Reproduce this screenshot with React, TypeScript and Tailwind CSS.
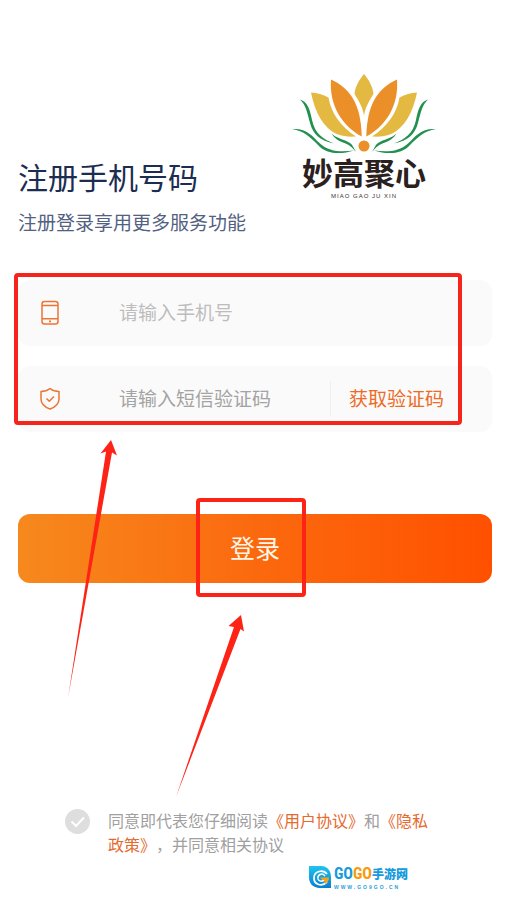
import React from "react";

function LotusHalf() {
  return (
    <>
      <path d="M19 18.500C25 19 31 20.500 36.500 23.500C39 39 49 53 64 62.500C56 63 50 62 46 60.500C31 54 23 38 19 18.500Z" fill="#e4b942" />
      <path d="M39 5.500C58 14 69 30 69.700 62.500C50 52 37 31 39 5.500Z" fill="#eb8f29" />
      <g fill="#22904f">
        <path d="M8 25.500C16 28 18 36 20 46C23 60 31 65 42 69.500C28 67 21 60 18 49C15 38 14 31 8 25.500Z" />
        <path d="M0 55C15 54 20 62 28 69.500C37 78 49 78 62 76.500C48 81 34 80 26 71C18 63 12 57 0 55Z" />
        <path d="M39.500 59.500C45 65 52 65 58 69C61 71 62 75 64 78C60 73 57 70.500 51 68.500C46 66.500 42 64 39.500 59.500Z" />
      </g>
    </>
  );
}

function LotusLogo() {
  return (
    <div className="flex w-36 flex-col items-center">
      <svg viewBox="0 0 144 82" className="h-[82px] w-36" fill="none" aria-hidden="true">
        <path d="M72 0C67 6 63 13 62.500 20C67 27 71 34 72 42C73 34 77 27 81.500 20C81 13 77 6 72 0Z" fill="#e4b942" />
        <LotusHalf />
        <g transform="translate(144 0) scale(-1 1)">
          <LotusHalf />
        </g>
        <circle cx="72" cy="72" r="5.5" fill="#eb8f29" />
      </svg>
      <span className="text-[31px] leading-8 font-bold text-[#2b201d]">妙高聚心</span>
      <span className="mt-1 font-['Liberation_Sans'] text-[6px] leading-[8px] tracking-[1px] whitespace-pre text-[#3b3230]">
        MIAO GAO JU XIN
      </span>
    </div>
  );
}

function PhoneIcon() {
  return (
    <svg viewBox="0 0 20 26" className="h-[26px] w-5" fill="none" stroke="#ed7433" strokeWidth="1.5" aria-hidden="true">
      <rect x="2" y="1.5" width="16" height="22.5" rx="2.5" />
      <path d="M2 5.500H18M2 18.700H18" />
      <path d="M9 21.400H11" strokeWidth="1.6" />
    </svg>
  );
}

function ShieldIcon() {
  return (
    <svg viewBox="0 0 20 24" className="h-6 w-5" fill="none" stroke="#ed7433" strokeWidth="1.5" strokeLinejoin="round" aria-hidden="true">
      <path d="M10 1.500C7.500 3.500 4.500 4.500 1 4.500V12C1 17 4.500 20 10 22C15.500 20 19 17 19 12V4.500C15.500 4.500 12.500 3.500 10 1.500Z" />
      <path d="M6.500 11.500L9.300 14.300L14 9.500" />
    </svg>
  );
}

function SiteMark() {
  return (
    <div className="flex items-center gap-[2px]">
      <svg viewBox="0 0 23 23" className="size-[23px]" fill="none" aria-hidden="true">
        <defs>
          <linearGradient id="markBlue" x1="0" y1="0" x2="0" y2="1">
            <stop stopColor="#20c4ee" />
            <stop offset="1" stopColor="#087ed2" />
          </linearGradient>
        </defs>
        <path d="M0 0H13C20 1 22 6 22 12V22H10C3 21 0 17 0 11Z" fill="url(#markBlue)" />
        <path d="M18 8C14 3 5 5 5 12C5 19 13 21 18 16" stroke="white" strokeWidth="1.800" />
        <path d="M16 10C13 6 8 9 9 13C10 16 14 16 16 13" stroke="white" strokeWidth="1.400" />
        <path d="M11 11.500H20C20 15 18 17 16 18L15 14H13Z" fill="#f6a21b" />
      </svg>
      <div className="flex flex-col">
        <div className="flex items-center leading-5 font-bold text-[#159bdc]">
          <span className="font-['Liberation_Sans_Narrow','Roboto_Condensed','Liberation_Sans'] text-[16px]">
            GO<span className="text-[#f99a0a]">GO</span>
          </span>
          <span className="text-[12px] font-black">手游网</span>
        </div>
        <span className="font-['Liberation_Sans'] text-[5px] leading-[6px] font-bold tracking-[2px] text-[#299ed8]">
          WWW.GO9GO.CN
        </span>
      </div>
    </div>
  );
}

function Arrows() {
  return (
    <svg viewBox="0 0 180 360" className="pointer-events-none absolute top-[440px] left-[66px] h-[360px] w-[180px]" fill="#fd2316" aria-hidden="true">
      <path d="M45 0L51 15.500L46 12.500L2 258L40 11.500L34.500 13.500Z" />
      <path d="M175 175L178 191.500L174.500 189L110 357L168 187L162.500 186Z" />
    </svg>
  );
}

const fieldRow = "flex h-[66px] items-center rounded-xl bg-[#fafafa] pl-[22px]";
const fieldInput = "min-w-0 flex-1 bg-transparent pb-[2px] text-[19px] leading-7 text-[#555555] outline-none";

export default function App() {
  return (
    <main className="relative min-h-screen bg-white pr-5 pl-[18px] font-['Noto_Sans_CJK_SC',sans-serif] [text-spacing-trim:space-all]">
      <header className="flex h-[240px] items-end justify-between">
        <div className="shrink-0 pb-1">
          <h1 className="text-[30px] leading-10 font-normal text-[#1b2d50]">注册手机号码</h1>
          <p className="mt-3 text-[19px] leading-7 text-[#52617f]">注册登录享用更多服务功能</p>
        </div>
        <div className="mr-14 pb-10">
          <LotusLogo />
        </div>
      </header>

      <form onSubmit={(event) => event.preventDefault()}>
        <div className="relative mt-10 flex flex-col gap-5">
          <div className={fieldRow}>
            <label htmlFor="phone" aria-label="手机号" className="w-[79px]">
              <PhoneIcon />
            </label>
            <input id="phone" type="tel" placeholder="请输入手机号" className={`${fieldInput} placeholder:text-[#bdbdbd]`} />
          </div>
          <div className={fieldRow}>
            <label htmlFor="code" aria-label="短信验证码" className="w-[79px]">
              <ShieldIcon />
            </label>
            <input id="code" type="text" placeholder="请输入短信验证码" className={`${fieldInput} placeholder:text-[#a3a3a3]`} />
            <button type="button" className="mr-12 flex h-9 items-center border-l border-[#eeeeee] pb-[2px] pl-[18px] text-[19px] leading-7 text-[#ee6b26]">
              获取验证码
            </button>
          </div>
          <div className="pointer-events-none absolute -top-[7px] right-[30px] bottom-[7px] -left-1 rounded border-4 border-[#f5251b]" />
        </div>

        <div className="relative mt-[82px]">
          <button
            type="submit"
            className="h-[69px] w-full rounded-xl bg-linear-to-r from-[#f6891d] via-[#fb690e] to-[#ff5000] pb-1 text-[25px] leading-9 text-[#fff6e8]"
          >
            登录
          </button>
          <div className="pointer-events-none absolute -top-4 -bottom-[14px] left-1/2 ml-[-59px] w-[110px] rounded border-4 border-[#fd2316]" />
        </div>

        <div className="relative mt-[225px] flex items-start gap-[18px] pr-8 pl-[47px]">
          <input id="agree" type="checkbox" aria-label="同意用户协议和隐私政策" className="sr-only" />
          <label htmlFor="agree" className="mt-[1px] size-[25px] shrink-0 rounded-full bg-[#dedede]">
            <svg viewBox="0 0 25 25" className="size-[25px]" fill="none" stroke="white" strokeWidth="2" aria-hidden="true">
              <path d="M6.500 12.500L11 17L19 8.500" />
            </svg>
          </label>
          <p className="text-[16px] leading-6 text-[#a0a0a0]">
            同意即代表您仔细阅读<a href="#terms" className="text-[#e56a2e]">《用户协议》</a>和<a href="#privacy" className="text-[#e56a2e]">《隐私<br />政策》</a>，并同意相关协议
          </p>
        </div>
      </form>

      <footer className="mt-2 flex justify-end pr-[84px]">
        <SiteMark />
      </footer>
      <Arrows />
    </main>
  );
}
